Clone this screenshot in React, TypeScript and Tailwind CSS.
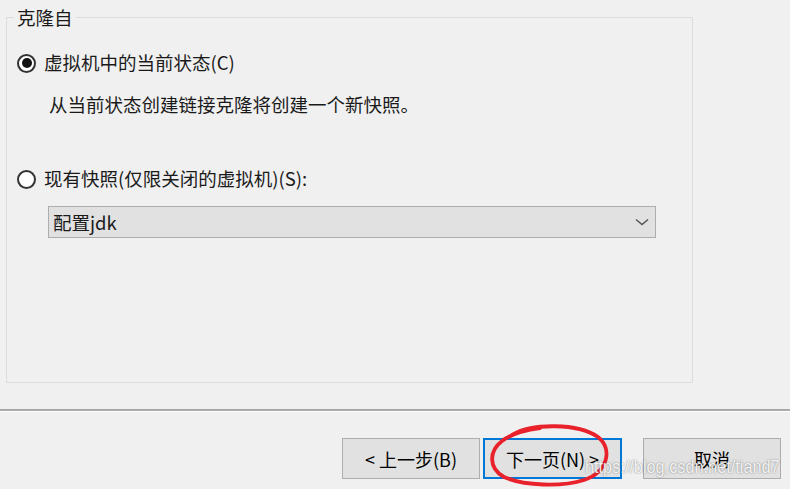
import React from "react";

const font = { fontFamily: '"Noto Sans CJK SC", "Noto Sans", sans-serif' };

const Radio = ({ checked }: { checked?: boolean }) => (
  <span className="flex h-[19px] w-[19px] shrink-0 items-center justify-center rounded-full border-2 border-[#333333] bg-white">
    {checked && <span className="h-[10px] w-[10px] rounded-full bg-[#111111]" />}
  </span>
);

const Button = ({ label, focused }: { label: string; focused?: boolean }) => (
  <button
    className={
      "flex h-[41px] items-center justify-center bg-[#e1e1e1] text-[18px] leading-none text-black " +
      (focused ? "w-[139px] border-2 border-[#0078d7]" : "w-[138px] border border-[#adadad]")
    }
  >
    {label}
  </button>
);

export default function App() {
  return (
    <div
      className="relative flex h-[489px] w-[790px] flex-col overflow-hidden bg-[#f0f0f0] text-[#1a1a1a]"
      style={font}
    >
      <fieldset className="ml-[6px] mt-[6px] h-[377px] w-[687px] border border-[#dcdcdc]">
        <legend className="ml-[7px] px-[3px] text-[18.5px] leading-[22px]">克隆自</legend>

        <label className="ml-[10px] mt-[22px] flex h-[26px] items-center gap-[8px] text-[18.5px]">
          <Radio checked />
          <span>虚拟机中的当前状态(C)</span>
        </label>

        <p className="ml-[42px] mt-[15px] text-[18.5px] leading-[26px]">
          从当前状态创建链接克隆将创建一个新快照。
        </p>

        <label className="ml-[10px] mt-[49px] flex h-[26px] items-center gap-[8px] text-[18.5px]">
          <Radio />
          <span>现有快照(仅限关闭的虚拟机)(S):</span>
        </label>

        <div className="ml-[41px] mt-[14px] flex h-[32px] w-[608px] items-center justify-between border border-[#adadad] bg-[#e1e1e1] pl-[4px] pr-[6px]">
          <span className="text-[18.5px] leading-none">配置jdk</span>
          <svg width="14" height="8" viewBox="0 0 14 8" fill="none">
            <path d="M1 1.5 L7 6.5 L13 1.5" stroke="#555555" strokeWidth="1.5" />
          </svg>
        </div>
      </fieldset>

      <div className="mt-[26px] h-[2px] bg-[#a9a9a9]" />
      <div className="h-px bg-white" />

      <div className="mt-[26px] flex justify-end pr-[9px]">
        <Button label="< 上一步(B)" />
        <div className="ml-[3px]">
          <Button label="下一页(N) >" focused />
        </div>
        <div className="ml-[21px]">
          <Button label="取消" />
        </div>
      </div>

      <svg
        className="pointer-events-none absolute left-[484px] top-[420px]"
        width="130"
        height="69"
        viewBox="0 0 130 69"
        fill="none"
      >
        <path
          d="M28 15 C48 3, 94 3, 114 17 C129 29, 124 52, 100 60 C78 67, 40 66, 20 57 C4 48, 5 31, 18 21 C26 15, 40 10, 56 8"
          stroke="#e8212b"
          strokeWidth="3.8"
          strokeLinecap="round"
        />
      </svg>

      <span
        className="pointer-events-none absolute left-[585px] top-[455px] origin-left scale-y-[1.15] text-[16.3px] leading-[22px] text-white/90 [text-shadow:0_0_1.5px_rgba(0,0,0,0.55)]"
        style={{ fontFamily: '"Liberation Sans", Arial, sans-serif' }}
      >
        https://blog.csdn.net/tiand7
      </span>
    </div>
  );
}
